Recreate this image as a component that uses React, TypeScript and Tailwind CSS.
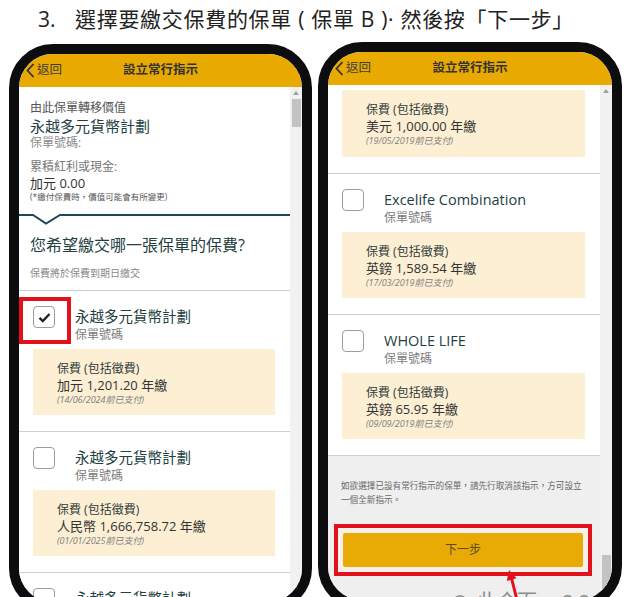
import React from "react";

const FONT = "font-['Open_Sans','Noto_Sans_CJK_TC',sans-serif]";

type Premium = { currency: string; amount: string; date: string };

function PremiumBox({ data, className = "" }: { data: Premium; className?: string }) {
  return (
    <div className={`ml-[14px] mr-[15px] h-[66px] bg-[#fcefd3] pl-[24px] pt-[11px] ${className}`}>
      <div className="text-[12px] leading-[17px] text-[#2f3a3a]">保費 (包括徵費)</div>
      <div className="text-[13px] leading-[17px] text-[#333]">
        {data.currency} {data.amount} 年繳
      </div>
      <div className="text-[9px] italic leading-[12px] text-[#808080]">({data.date}前已支付)</div>
    </div>
  );
}

function Checkbox({ checked, highlight }: { checked?: boolean; highlight?: boolean }) {
  return (
    <div className="relative flex size-[22px] shrink-0 items-center justify-center rounded-[4px] border border-[#9c9c9c] bg-white">
      {checked && (
        <svg width="13" height="11" viewBox="0 0 13 11">
          <path d="M1.5 5.8 L4.8 9 L11.5 2" fill="none" stroke="#222" strokeWidth="2.3" />
        </svg>
      )}
      {highlight && (
        <span className="absolute -left-[15px] -top-[10px] h-[47px] w-[52px] border-[4px] border-[#e0131c]" />
      )}
    </div>
  );
}

function PolicyItem({
  name,
  premium,
  checked,
  highlight,
}: {
  name: string;
  premium: Premium;
  checked?: boolean;
  highlight?: boolean;
}) {
  return (
    <div className="border-t border-[#cfcfcf] pb-[16px] pt-[15px]">
      <div className="flex items-start pl-[14px]">
        <Checkbox checked={checked} highlight={highlight} />
        <div className="ml-[20px] pt-[1px]">
          <div className="text-[14.5px] leading-[20px] text-[#23403f]">{name}</div>
          <div className="text-[12px] leading-[16px] text-[#7b7b7b]">保單號碼</div>
        </div>
      </div>
      <PremiumBox data={premium} className="mt-[6px]" />
    </div>
  );
}

function Header() {
  return (
    <div className="grid h-[33px] shrink-0 grid-cols-[1fr_auto_1fr] items-center bg-[#e8a900] px-[7px]">
      <div className="flex items-center gap-[2px] text-[12.5px] text-[#3d3d3d]">
        <svg width="9" height="15" viewBox="0 0 9 15">
          <path d="M7.5 1 L1.5 7.5 L7.5 14" fill="none" stroke="#333" strokeWidth="1.8" />
        </svg>
        <span>返回</span>
      </div>
      <div className="text-[12.5px] font-bold text-[#333]">設立常行指示</div>
      <div />
    </div>
  );
}

function Scrollbar({ thumbTop, thumbHeight }: { thumbTop: number; thumbHeight: number }) {
  return (
    <div className="flex w-[12px] shrink-0 flex-col items-center bg-[#f1f1f1]">
      <span className="mt-[4px] h-0 w-0 border-x-[3px] border-b-[4px] border-x-transparent border-b-[#a0a0a0]" />
      <span
        className="w-[9px] bg-[#c3c3c3]"
        style={{ marginTop: thumbTop, height: thumbHeight }}
      />
    </div>
  );
}

function Phone({ children, className = "" }: { children: React.ReactNode; className?: string }) {
  return (
    <div
      className={`flex h-[568px] flex-col overflow-hidden rounded-[44px] border-[10px] border-[#0d0d10] bg-white ${className}`}
    >
      <Header />
      {children}
    </div>
  );
}

function LeftScreen() {
  return (
    <div className="flex min-h-0 flex-1">
      <div className="min-w-0 flex-1 bg-white">
        <div className="px-[11px] pt-[13px]">
          <div className="text-[12px] leading-[16px] text-[#555]">由此保單轉移價值</div>
          <div className="text-[15px] leading-[20px] text-[#23403f]">永越多元貨幣計劃</div>
          <div className="text-[12px] leading-[14px] text-[#8a8a8a]">保單號碼:</div>
          <div className="mt-[9px] text-[12px] leading-[16px] text-[#777]">累積紅利或現金:</div>
          <div className="text-[13px] leading-[16px] text-[#333]">加元 0.00</div>
          <div className="text-[8.5px] leading-[11px] text-[#555]">(*繳付保費時，價值可能會有所變更)</div>
        </div>
        <svg className="mt-[12px] block" width="271" height="12" viewBox="0 0 271 12">
          <polyline
            points="0,1 14,1 27,9.5 41,1 271,1"
            fill="none"
            stroke="#1d4a55"
            strokeWidth="2"
          />
        </svg>
        <div className="px-[11px] pt-[8px]">
          <div className="text-[16px] leading-[22px] text-[#23403f]">您希望繳交哪一張保單的保費?</div>
          <div className="mt-[10px] pb-[10px] text-[10px] leading-[14px] text-[#888]">保費將於保費到期日繳交</div>
        </div>
        <PolicyItem
          name="永越多元貨幣計劃"
          checked
          highlight
          premium={{ currency: "加元", amount: "1,201.20", date: "14/06/2024" }}
        />
        <PolicyItem
          name="永越多元貨幣計劃"
          premium={{ currency: "人民幣", amount: "1,666,758.72", date: "01/01/2025" }}
        />
        <PolicyItem
          name="永越多元貨幣計劃"
          premium={{ currency: "加元", amount: "1,000.00", date: "01/01/2025" }}
        />
      </div>
      <Scrollbar thumbTop={4} thumbHeight={28} />
    </div>
  );
}

function RightScreen() {
  return (
    <div className="flex min-h-0 flex-1">
      <div className="min-w-0 flex-1 bg-[#efefef]">
        <div className="bg-white">
          <div className="pb-[16px] pt-[5px]">
            <PremiumBox data={{ currency: "美元", amount: "1,000.00", date: "19/05/2019" }} className="!h-[67px]" />
          </div>
          <PolicyItem
            name="Excelife Combination"
            premium={{ currency: "英鎊", amount: "1,589.54", date: "17/03/2019" }}
          />
          <PolicyItem
            name="WHOLE LIFE"
            premium={{ currency: "英鎊", amount: "65.95", date: "09/09/2019" }}
          />
        </div>
        <div className="border-t border-[#cfcfcf] px-[13px] pt-[23px]">
          <p className="text-[8.6px] leading-[14px] text-[#666]">
            如欲選擇已設有常行指示的保單，請先行取消該指示，方可設立一個全新指示。
          </p>
        </div>
        <div className="ml-[6px] mr-[8px] mt-[17px] border-[4px] border-[#e0131c] bg-[#f7efe9] p-[5px]">
          <button className="flex h-[34px] w-full items-center justify-center rounded-[2px] bg-[#e8ab05] text-[12px] text-[#5a4b22]">
            下一步
          </button>
        </div>
        <div className="mt-[14px] flex items-center gap-[10px] pl-[125px] text-[20px] leading-[24px] text-[#8c8c8c]">
          <span className="size-[14px] shrink-0 rounded-full bg-[#9a9a9a]" />
          <span className="whitespace-nowrap">此介面一 2 2 頁</span>
        </div>
      </div>
      <Scrollbar thumbTop={462} thumbHeight={50} />
    </div>
  );
}

export default function App() {
  return (
    <div className={`relative h-[597px] w-[632px] overflow-hidden bg-white ${FONT}`}>
      <div className="flex h-[42px] items-start pl-[38px] pt-[5px] text-[21px] leading-[28px] text-[#222]">
        <span className="w-[37px]">3.</span>
        <span className="whitespace-nowrap tracking-[0.7px]">選擇要繳交保費的保單 ( 保單 B )·  然後按「下一步」</span>
      </div>
      <div className="flex gap-[6px] pl-[9px]">
        <Phone className="mt-[2px] w-[303px]">
          <LeftScreen />
        </Phone>
        <Phone className="w-[304px]">
          <RightScreen />
        </Phone>
      </div>
      <svg className="absolute left-[500px] top-[566px]" width="24" height="34" viewBox="0 0 24 34">
        <line x1="11.7" y1="13" x2="17" y2="34" stroke="#e0131c" strokeWidth="3" />
        <polygon points="9,4 16.5,12.3 6.8,15" fill="#e0131c" />
      </svg>
    </div>
  );
}
